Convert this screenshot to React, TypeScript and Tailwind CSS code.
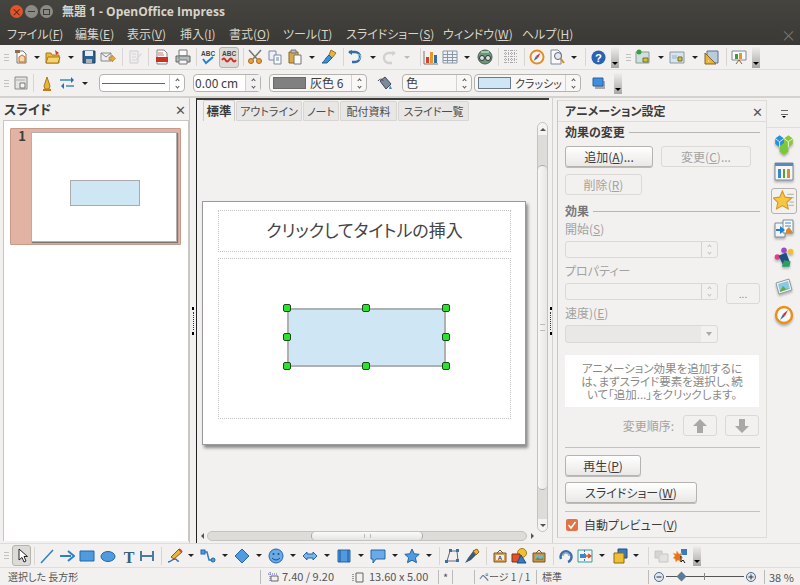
import type { ReactNode } from "react";

const S = ({ children, c = "" }: { children: ReactNode; c?: string }) => (
  <svg viewBox="0 0 16 16" className={`h-4 w-4 shrink-0 ${c}`}>{children}</svg>
);

function T({ w, children }: { w: string; children?: ReactNode }) {
  return <div className={`flex shrink-0 items-center justify-center ${w}`}>{children}</div>;
}
const Drop = ({ w }: { w: string }) => (
  <T w={w}>
    <div className="h-0 w-0 border-x-[3px] border-t-[3px] border-x-transparent border-t-[#222]" />
  </T>
);
const DropOff = ({ w }: { w: string }) => (
  <T w={w}>
    <div className="h-0 w-0 border-x-[3px] border-t-[3px] border-x-transparent border-t-[#bbb]" />
  </T>
);
const Sep = ({ w }: { w: string }) => (
  <T w={w}>
    <div className="h-[18px] w-px shrink-0 bg-[#d8d6d3]" />
  </T>
);
const Grip = ({ w }: { w: string }) => (
  <T w={w}>
    <div className="flex flex-col gap-[2px]">
      <div className="h-px w-[5px] bg-[#c4c2be]" />
      <div className="h-px w-[5px] bg-[#c4c2be]" />
      <div className="h-px w-[5px] bg-[#c4c2be]" />
    </div>
  </T>
);
const Over = ({ w, h }: { w: string; h: string }) => (
  <T w={w}>
    <div className={`flex w-2 shrink-0 items-end justify-center bg-gradient-to-b from-[#efeeec] to-[#a9a7a3] pb-[3px] ${h}`}>
      <div className="h-0 w-0 border-x-[3px] border-t-[3px] border-x-transparent border-t-black" />
    </div>
  </T>
);

/* toolbar icons */
const INew = () => <S><path d="M4 2h6l3 3v9H4z" fill="#fdfdfb" stroke="#777" /><path d="M6 8l3-2 3 2v5H6z" fill="#f5d9a8" stroke="#d2651d" /><path d="M2 1h5v3H2z" fill="#8a6d4c" /></S>;
const IOpen = () => <S><path d="M1 4h5l1 2h7v8H1z" fill="#e8b93a" stroke="#a8791a" /><path d="M1 14l2-6h12l-2 6z" fill="#f6d469" stroke="#a8791a" /><path d="M10 1l4 3-3 2z" fill="#d9391e" /></S>;
const ISave = () => <S><path d="M2 2h12v12H2z" fill="#2f5f8c" stroke="#1f3f60" /><path d="M4 2h8v5H4z" fill="#e8edf2" /><path d="M5 10h6v4H5z" fill="#a9b6c2" /></S>;
const IMail = () => <S><path d="M1 4h10v8H1z" fill="#eee" stroke="#888" /><path d="M1 4l5 4 5-4" fill="none" stroke="#888" /><path d="M9 8h3V6l3.500 3.500L12 13v-2H9z" fill="#e8a93a" stroke="#b07a18" strokeWidth=".6" /></S>;
const IEdit = () => <S c="opacity-40"><path d="M3 2h8v12H3z" fill="#eee" stroke="#999" /><path d="M5 5h4M5 8h4M5 11h3" stroke="#aaa" /><path d="M8 11l6-7 1 1-6 7z" fill="#bbb" /></S>;
const IPdf = () => <S><path d="M3 1h7l3 3v11H3z" fill="#fafafa" stroke="#888" /><path d="M2 8h12v5H2z" fill="#cf2f22" /><path d="M4 4h5M4 6h6" stroke="#cf7a70" /></S>;
const IPrint = () => <S><path d="M4 1h8v6H4z" fill="#fafafa" stroke="#777" /><path d="M1 7h14v6H1z" fill="#b8bcbf" stroke="#666" /><path d="M4 11h8v4H4z" fill="#f5f5f5" stroke="#777" /><path d="M3 9h2" stroke="#3a9a3a" /></S>;
const ISpell = () => <S><text x="1" y="7" fontSize="6.500" fontWeight="700" fill="#444" fontFamily="Liberation Sans">ABC</text><path d="M3 10l3 4 7-6" fill="none" stroke="#2b7fd0" strokeWidth="2" /></S>;
const IAuto = () => <S><text x="1" y="7" fontSize="6.500" fontWeight="700" fill="#444" fontFamily="Liberation Sans">ABC</text><path d="M1 11q2-3 3.500 0t3.500 0 3.500 0 3.500 0" fill="none" stroke="#d12a1e" strokeWidth="1.800" /></S>;
const ICut = () => <S><path d="M2 1l8 9M14 1l-8 9" stroke="#777" strokeWidth="1.600" /><circle cx="4" cy="12" r="2.500" fill="#e8a03a" stroke="#b3661a" /><circle cx="12" cy="12" r="2.500" fill="#e8a03a" stroke="#b3661a" /></S>;
const ICopy = () => <S><path d="M2 2h7v9H2z" fill="#eef" stroke="#7a8a9a" /><path d="M7 6h7v9H7z" fill="#fafafa" stroke="#7a8a9a" /><path d="M9 9h3M9 11h3" stroke="#5a8ac0" /></S>;
const IPaste = () => <S><path d="M2 3h9v11H2z" fill="#d8a84a" stroke="#8a6420" /><path d="M4 1h5v3H4z" fill="#bbb" stroke="#777" /><path d="M7 6h7v9H7z" fill="#fafafa" stroke="#777" /></S>;
const IBrush = () => <S><path d="M10 1l5 3-4 5-3-3z" fill="#e8b43a" stroke="#9a7320" /><path d="M8 6l3 3-5 5H1c3-2 3-5 7-8z" fill="#3d8fd8" stroke="#1f5f9c" /></S>;
const IUndo = () => <S><path d="M2 3h6a5 5 0 010 10H5" fill="none" stroke="#2f6ea8" strokeWidth="2.400" /><path d="M1 3l4-2v5z" fill="#2f6ea8" /><path d="M11 5l3 2-2 4" fill="none" stroke="#9cc" /></S>;
const IRedo = () => <S c="opacity-30"><path d="M14 4H8a5 5 0 000 10h3" fill="none" stroke="#888" strokeWidth="2.400" /><path d="M15 4l-4-2v5z" fill="#888" /></S>;
const IChart = () => <S><path d="M1 2v13h14" fill="none" stroke="#777" /><path d="M3 8h3v6H3z" fill="#d8402c" /><path d="M7 3h3v11H7z" fill="#e8962a" /><path d="M11 6h3v8h-3z" fill="#2f6ea8" /></S>;
const ITable = () => <S><path d="M1 2h14v12H1z" fill="#eef2f6" stroke="#8a97a5" /><path d="M1 5.500h14M1 8.500h14M1 11.500h14M5.500 2v12M10.500 2v12" stroke="#8a97a5" /></S>;
const INav = () => <S><circle cx="8" cy="8" r="7" fill="#6a9a72" stroke="#4a5a58" /><circle cx="5" cy="9" r="2.500" fill="#d8e4e8" stroke="#333" /><circle cx="11" cy="9" r="2.500" fill="#d8e4e8" stroke="#333" /><path d="M4 3h8" stroke="#cfe" /></S>;
const IGrid = () => <S><path d="M1 1.500h14M1 4.500h14M1 7.500h14M1 10.500h14M1 13.500h14M2.500 1v14M5.500 1v14M8.500 1v14M11.500 1v14" stroke="#aaa" strokeDasharray="1 1" /></S>;
const ICompass = () => <S><circle cx="8" cy="8" r="6.500" fill="#f4f4f4" stroke="#e88c1e" strokeWidth="2" /><path d="M11.500 4L7 7l2 2z" fill="#d8302a" /><path d="M4.500 12L7 7l2 2z" fill="#2f6ea8" /></S>;
const IZoom = () => <S><path d="M2 1h7l3 3v11H2z" fill="#fafafa" stroke="#7a8a9a" /><circle cx="9" cy="7" r="3.500" fill="#dfeaf4" stroke="#666" /><path d="M11.500 9.500L15 14" stroke="#c89030" strokeWidth="2" /></S>;
const IHelp = () => <svg viewBox="0 0 16 16" className="h-[15px] w-[15px] shrink-0"><circle cx="8" cy="8" r="7.500" fill="#2a63b4" /><text x="8" y="12.500" textAnchor="middle" fontSize="12" fontWeight="700" fill="#fff" fontFamily="Liberation Sans">?</text></svg>;
const ISlideNew = () => <S><path d="M1 3h13v11H1z" fill="#cfe0dc" stroke="#8a9a98" /><path d="M8 9h5v4H8z" fill="#c9c34a" stroke="#77701a" /><circle cx="4" cy="3" r="2.500" fill="#3aa03a" /></S>;
const ILayout = () => <S><path d="M1 3h14v11H1z" fill="#d8e4ee" stroke="#8a9aa8" /><path d="M3 6h5v4H3z" fill="#b8cbd8" /><path d="M9 8h4v4H9z" fill="#c9c34a" stroke="#77701a" /></S>;
const IDesign = () => <S><path d="M3 2h11v12H3z" fill="#b8cce0" stroke="#5a7090" /><path d="M1 15V4l11 11z" fill="#e8b43a" stroke="#8a6420" /><path d="M4 11v1.500h1.500z" fill="#fff" /></S>;
const IShow = () => <S><path d="M1 2h14v9H1z" fill="#fafafa" stroke="#7a8a98" /><path d="M4 5h3v5H4z" fill="#3a9a4a" /><path d="M8 4h3v6H8z" fill="#e8962a" /><path d="M8 11l-3 4M8 11l3 4" stroke="#a05a2a" /></S>;
const ISlideMini = () => <S><path d="M2 2h12v12H2z" fill="#e4e4e2" stroke="#8a8a88" /><path d="M3 5h9" stroke="#aaa" /><path d="M7 8h5v5H7z" fill="#f4f4f4" stroke="#777" /></S>;
const ILineStyle = () => <S><path d="M6 14h4l1-3-3-9-3 9z" fill="#e8b43a" stroke="#a87a1a" /><path d="M4 15h8" stroke="#c87a1a" strokeWidth="2" /></S>;
const IArrowsLine = () => <S><path d="M1 5h11M7 11h8" stroke="#3a8ac8" strokeWidth="1.600" /><path d="M12 2l3 3-3 3zM5 8l-3 3 3 3z" fill="#2f6ea8" /></S>;
const IBucket = () => <S><path d="M3 6l5-4 6 7-5 5z" fill="#7a8a98" stroke="#445" /><path d="M1 6c2-3 5-2 5 0" fill="none" stroke="#445" /><path d="M13 10l2 4h-3z" fill="#3a8ac8" /></S>;
const IShadow = () => <S><path d="M4 6h10v8H4z" fill="#aaa" /><path d="M2 3h10v8H2z" fill="#3f8fe0" stroke="#2a62a0" /></S>;

const IPointer = () => <S><path d="M5 1v11l3-2.500 2 4.500 2-1-2-4.500h3.500z" fill="#fff" stroke="#222" /></S>;
const ILine = () => <S><path d="M2 15L14 2" stroke="#2f7fc8" strokeWidth="1.500" /></S>;
const IArrowR = () => <S><path d="M1 8h11" stroke="#2f7fc8" strokeWidth="2" /><path d="M9 3l6 5-6 5" fill="none" stroke="#2f7fc8" strokeWidth="2" /></S>;
const IRect = () => <S><path d="M1 3h14v10H1z" fill="#4f9be0" stroke="#2565a8" /></S>;
const IEllipse = () => <S><ellipse cx="8" cy="8.500" rx="7" ry="5" fill="#4f9be0" stroke="#2565a8" /></S>;
const ITextTool = () => <S><text x="8" y="14.500" textAnchor="middle" fontSize="16" fontWeight="700" fill="#3a5f80" fontFamily="Liberation Serif">T</text></S>;
const IDim = () => <S><path d="M2 3v10M14 3v10M2 8h12" stroke="#4a7aa0" strokeWidth="2" /></S>;
const IPen = () => <S><path d="M1 14c3 0 4-3 7-3s1 3 4 2" fill="none" stroke="#2f6ea8" strokeWidth="1.400" /><path d="M4 9l8-8 3 3-8 7z" fill="#e8b43a" stroke="#8a5a1a" /><path d="M12 1l3 3" stroke="#d8402c" strokeWidth="2" /></S>;
const IConn = () => <S><path d="M3 4h4l2 8h4" fill="none" stroke="#2f7fc8" strokeWidth="1.500" /><rect x="1" y="2" width="4" height="4" fill="#4f9be0" stroke="#2565a8" /><circle cx="13" cy="12" r="2" fill="#4f9be0" stroke="#2565a8" /></S>;
const IDiamond = () => <S><path d="M8 1l7 7-7 7-7-7z" fill="#4f9be0" stroke="#2565a8" /></S>;
const ISmile = () => <S><circle cx="8" cy="8" r="7" fill="#6aaae8" stroke="#2565a8" /><circle cx="5.500" cy="6" r="1" fill="#1f4f80" /><circle cx="10.500" cy="6" r="1" fill="#1f4f80" /><path d="M4 10q4 4 8 0" fill="none" stroke="#1f4f80" /></S>;
const IBlock = () => <S><path d="M1 8l4-4v2h6V4l4 4-4 4v-2H5v2z" fill="#7ab5ec" stroke="#2565a8" /></S>;
const IFlow = () => <S><path d="M2 2h12v12H2z" fill="#4f9be0" stroke="#2565a8" /><path d="M4 2v12M12 2v12" stroke="#1f5590" /></S>;
const ICallout = () => <S><path d="M1 2h14v9H6l-3 4v-4H1z" fill="#6aaae8" stroke="#2565a8" /></S>;
const IStar = () => <S><path d="M8 1l2.200 4.800 5 .500-3.800 3.400 1.100 5L8 12.200 3.500 14.700l1.100-5L.8 6.300l5-.500z" fill="#4f9be0" stroke="#2565a8" /></S>;
const IPoints = () => <S><path d="M3 13L6 3h7l1 10z" fill="none" stroke="#667" /><path d="M5 1h3v3H5zM12 1h3v3h-3zM1 12h3v3H1zM12 11h3v3h-3z" fill="#3a6ea8" /></S>;
const IGlue = () => <S><path d="M1 15l3-5 6-8 4 3-7 7z" fill="#3a5a7a" /><path d="M9 3l4-2 2 3-3 3z" fill="#e8b43a" stroke="#8a6420" /></S>;
const IFontwork = () => <S><path d="M2 5h12v9H2z" fill="#d8a050" stroke="#7a5a2a" /><path d="M5 5l3-3 3 3" fill="none" stroke="#7a5a2a" /><path d="M4 7h8v5H4z" fill="#eee" /><text x="8" y="11.500" textAnchor="middle" fontSize="6" fontWeight="700" fill="#246" fontFamily="Liberation Sans">A</text></S>;
const IShapes = () => <S><circle cx="11" cy="5" r="4.500" fill="#f0c030" stroke="#a88018" /><path d="M1 6h8v8H1z" fill="#e0522a" stroke="#8a3018" /><path d="M10 7l5 8H6z" fill="#3a7ac0" stroke="#1f4f80" /></S>;
const IPicture = () => <S><path d="M2 5h12v9H2z" fill="#c89040" stroke="#7a5a2a" /><path d="M5 5l3-3 3 3" fill="none" stroke="#7a5a2a" /><path d="M4 7h8v5H4z" fill="#7ab0d8" /><path d="M4 12l3-3 2 2 3-1v2z" fill="#5a9a3a" /></S>;
const IRotate = () => <S><path d="M3 11a5.500 5.500 0 117 3" fill="none" stroke="#3a6ea8" strokeWidth="2.500" /><path d="M5 8a3 3 0 116 0" fill="none" stroke="#9ab" strokeWidth="1.500" /></S>;
const IAlign = () => <S><path d="M1 2h14v12H1z" fill="#f4f4f4" stroke="#3a9a9a" /><path d="M7.500 2v12" stroke="#3a7ac0" strokeDasharray="2 1" /><path d="M3 6h6v4H3z" fill="#3a8ac8" /><path d="M9 8h5M11 6l3 2-3 2" fill="none" stroke="#d8502a" strokeWidth="1.400" /></S>;
const IArrange = () => <S><path d="M6 1h9v9H6z" fill="#3a7ac0" stroke="#1f4f80" /><path d="M2 5h10v10H2z" fill="#f0c030" stroke="#8a6a18" /></S>;
const IExtrude = () => <S c="opacity-40"><path d="M2 3h7v7H2z" fill="#aaa" stroke="#888" /><path d="M9 6h6v8H6v-4" fill="#ccc" stroke="#888" /></S>;
const IInteract = () => <S><path d="M9 1h6v6H9z" fill="#3a7ac0" /><path d="M1 5l3 1 1-3 2 3 3-1-1 3 2 2-3 1 1 3-3-2-2 2-1-3-2-1 2-2z" fill="#e8702a" stroke="#f4c030" strokeWidth=".6" /><path d="M9 8v6l2-2 2 3" fill="#fff" stroke="#111" /></S>;

/* sidebar deck icons */
const DeckCube = () => <svg viewBox="0 0 20 20" className="h-[22px] w-[22px]"><path d="M2 5l4-3 4 3v5l-4 3-4-3z" fill="#2f8fd8" /><path d="M10 5l4-3 4 3v5l-4 3-4-3z" fill="#8ac83a" /><path d="M6 12l4-3 4 3v5l-4 3-4-3z" fill="#7ac83a" /><path d="M2 5l4 3 4-3M10 5l4 3 4-3M6 8v5M14 8v5" fill="none" stroke="#fff" strokeWidth=".7" /></svg>;
const DeckBoard = () => <svg viewBox="0 0 20 20" className="h-5 w-5"><path d="M1 1h18v17H1z" fill="#f4f6f8" stroke="#7a8a98" /><path d="M1 1h18v3H1z" fill="#5a88b8" /><path d="M4 7h3v9H4z" fill="#3a8ac8" /><path d="M9 7h2v9H9z" fill="#5aa03a" /><path d="M13 7h3v9h-3z" fill="#d8902a" /></svg>;
const DeckStar = () => <svg viewBox="0 0 20 20" className="h-[22px] w-[22px]"><path d="M13 4h6M14 7h5M15 11h4M14 14h5" stroke="#bbb" /><path d="M8.500 1l2.500 5.500 6 .700-4.400 4 1.200 6-5.300-3-5.300 3 1.200-6L.1 7.200l6-.700z" fill="#f6c840" stroke="#d8942a" /></svg>;
const DeckTrans = () => <svg viewBox="0 0 20 20" className="h-5 w-5"><path d="M1 4h10v14H1z" fill="#f4f4f4" stroke="#7a8a98" /><path d="M9 1h10v13H9z" fill="#fafafa" stroke="#7a8a98" /><path d="M11 4h6M11 7h6" stroke="#3a8ac8" /><path d="M2 10h4V7l5 4-5 4v-3H2z" fill="#1f7fd0" /><path d="M12 11l3-3 3 4v2h-6z" fill="#d88a2a" /></svg>;
const DeckGallery = () => <svg viewBox="0 0 20 20" className="h-[22px] w-[22px]"><circle cx="4" cy="9" r="2.500" fill="#e83a8a" /><circle cx="10" cy="3" r="2.500" fill="#9a4ac8" /><circle cx="16" cy="4" r="2.500" fill="#f0c030" /><path d="M5 8l7-3 3 8-5 5z" fill="#1f4f80" /><path d="M10 12l6 1-1 5H8z" fill="#2aa060" /></svg>;
const DeckPhoto = () => <svg viewBox="0 0 20 20" className="h-5 w-5"><path d="M2 6l13-4 3 11-13 4z" fill="#f4f4f4" stroke="#8a9a98" /><path d="M4 7l10-3 2 8-10 3z" fill="#8ac8e8" /><path d="M6 14l3-5 3 3 4-1-10 4z" fill="#6aa83a" /></svg>;
const DeckCompass = () => <svg viewBox="0 0 20 20" className="h-5 w-5"><circle cx="10" cy="10" r="8" fill="#f8f8f8" stroke="#e8901e" strokeWidth="2.400" /><path d="M14 5l-5 4 2 2z" fill="#d8302a" /><path d="M6 15l3-6 2 2z" fill="#2f6ea8" /></svg>;

function Spin({ off = false, c = "" }: { off?: boolean; c?: string }) {
  const col = off ? "border-[#c4c2be]" : "border-[#555]";
  return (
    <div className={`flex shrink-0 flex-col items-center justify-center gap-[3px] border-l border-[#d4d2ce] ${c}`}>
      <div className={`h-[3px] w-[3px] rotate-45 border-l border-t ${col}`} />
      <div className={`h-[3px] w-[3px] rotate-45 border-b border-r ${col}`} />
    </div>
  );
}

function Btn({ label, hot, tail = "", w, h, off = false }: { label: string; hot: string; tail?: string; w: string; h: string; off?: boolean }) {
  return (
    <div className={`flex items-center justify-center rounded-[3px] border text-[12px] ${w} ${h} ${off ? "border-[#dbd9d6] text-[#a3a29e]" : "border-[#b5b3ae] bg-gradient-to-b from-white to-[#e9e8e6] text-[#3c3c3c] shadow-[0_1px_0_#bbb]"}`}>
      {label}(<span className="underline">{hot}</span>){tail}
    </div>
  );
}

function SectionHead({ label, off = false }: { label: string; off?: boolean }) {
  return (
    <div className="flex h-5 items-center gap-1">
      <span className={`text-[12px] font-bold ${off ? "text-[#77767a]" : "text-[#3c3c3c]"}`}>{label}</span>
      <div className="h-px flex-1 bg-[#b8b6b2]" />
    </div>
  );
}

function Handle({ pos }: { pos: string }) {
  return <div className={`absolute h-2 w-2 rounded-[2px] border border-[#1a4a1a] bg-[#2fe02f] ${pos}`} />;
}

function SplitDots() {
  return (
    <div className="flex h-[28px] w-[3px] flex-col items-center justify-between">
      <div className="h-[3px] w-[2px] bg-black" />
      <div className="h-[18px] w-px border-l border-dotted border-[#333]" />
      <div className="h-[3px] w-[2px] bg-black" />
    </div>
  );
}

const tabOff = "flex h-[20px] items-center justify-center rounded-t-[2px] border border-[#d8d6d2] bg-[#e8e7e5] text-[11px] text-[#4c4c4c]";
const deckItem = "flex h-[26px] w-[26px] items-center justify-center drop-shadow-[0_2px_1px_rgba(0,0,0,0.25)]";

export default function App() {
  return (
    <div className="flex h-[585px] w-[800px] flex-col overflow-hidden bg-[#f2f1f0] font-['Noto_Sans_CJK_JP',sans-serif] text-[#3c3c3c] [font-feature-settings:'palt']">
      {/* title + menu */}
      <div className="h-[45px] shrink-0 bg-gradient-to-b from-[#45443f] to-[#3a3935]">
        <div className="flex h-[23px] items-center pl-[10px]">
          <div className="flex h-[13px] w-[13px] items-center justify-center rounded-full bg-[#e2542a] text-[10px] leading-none text-[#4a1a0a]">×</div>
          <div className="ml-[2px] flex h-[13px] w-[13px] items-center justify-center rounded-full bg-[#8c8a84]"><div className="h-px w-[7px] bg-[#3c3b37]" /></div>
          <div className="ml-[2px] flex h-[13px] w-[13px] items-center justify-center rounded-full bg-[#8c8a84]"><div className="h-[6px] w-[7px] border border-[#3c3b37]" /></div>
          <span className="ml-[9px] font-['Open_Sans','Noto_Sans_CJK_JP',sans-serif] text-[12px] font-bold text-[#d8d4ca]">無題 1 - OpenOffice Impress</span>
        </div>
        <div className="flex h-[22px] items-center justify-between text-[12px] text-[#d8d4ca]">
          <div className="flex items-center pl-[7px]">
            <span className="w-[68px]">ファイル(<span className="underline">F</span>)</span>
            <span className="w-[52px]">編集(<span className="underline">E</span>)</span>
            <span className="w-[53px]">表示(<span className="underline">V</span>)</span>
            <span className="w-[49px]">挿入(<span className="underline">I</span>)</span>
            <span className="w-[54px]">書式(<span className="underline">O</span>)</span>
            <span className="w-[63px]">ツール(<span className="underline">T</span>)</span>
            <span className="w-[97px]">スライドショー(<span className="underline">S</span>)</span>
            <span className="w-[79px]">ウィンドウ(<span className="underline">W</span>)</span>
            <span>ヘルプ(<span className="underline">H</span>)</span>
          </div>
          <span className="pr-[4px] text-[15px] leading-none text-[#77756f]">×</span>
        </div>
      </div>

      {/* standard toolbar */}
      <div className="flex h-[25px] shrink-0 items-center border-b border-[#e0dedb]">
        <Grip w="w-[12px]" />
        <T w="w-[17px]"><INew /></T>
        <Drop w="w-[16px]" />
        <T w="w-[16px]"><IOpen /></T>
        <Drop w="w-[20px]" />
        <T w="w-[16px]"><ISave /></T>
        <T w="w-[22px]"><IMail /></T>
        <Sep w="w-[6px]" />
        <T w="w-[20px]"><IEdit /></T>
        <Sep w="w-[6px]" />
        <T w="w-[22px]"><IPdf /></T>
        <T w="w-[20px]"><IPrint /></T>
        <Sep w="w-[6px]" />
        <T w="w-[18px]"><ISpell /></T>
        <T w="w-[24px]">
          <div className="flex h-[21px] w-[20px] items-center justify-center rounded-[3px] border border-[#b5b3ae] bg-[#dddbd8]"><IAuto /></div>
        </T>
        <Sep w="w-[4px]" />
        <T w="w-[20px]"><ICut /></T>
        <T w="w-[20px]"><ICopy /></T>
        <T w="w-[20px]"><IPaste /></T>
        <Drop w="w-[14px]" />
        <T w="w-[20px]"><IBrush /></T>
        <Sep w="w-[8px]" />
        <T w="w-[16px]"><IUndo /></T>
        <Drop w="w-[20px]" />
        <T w="w-[12px]"><IRedo /></T>
        <DropOff w="w-[24px]" />
        <Sep w="w-[2px]" />
        <T w="w-[20px]"><IChart /></T>
        <T w="w-[18px]"><ITable /></T>
        <Drop w="w-[16px]" />
        <T w="w-[20px]"><INav /></T>
        <Sep w="w-[6px]" />
        <T w="w-[20px]"><IGrid /></T>
        <Sep w="w-[6px]" />
        <T w="w-[20px]"><ICompass /></T>
        <T w="w-[20px]"><IZoom /></T>
        <Drop w="w-[14px]" />
        <Sep w="w-[8px]" />
        <T w="w-[18px]"><IHelp /></T>
        <Over w="w-[16px]" h="h-[21px]" />
        <Grip w="w-[10px]" />
        <T w="w-[20px]"><ISlideNew /></T>
        <Drop w="w-[16px]" />
        <T w="w-[16px]"><ILayout /></T>
        <Drop w="w-[20px]" />
        <T w="w-[14px]"><IDesign /></T>
        <Sep w="w-[14px]" />
        <T w="w-[12px]"><IShow /></T>
        <Over w="w-[22px]" h="h-[21px]" />
      </div>

      {/* line and filling toolbar */}
      <div className="flex h-[26px] shrink-0 items-center text-[12px]">
        <Grip w="w-[12px]" />
        <T w="w-[17px]"><ISlideMini /></T>
        <Sep w="w-[9px]" />
        <T w="w-[18px]"><ILineStyle /></T>
        <T w="w-[22px]"><IArrowsLine /></T>
        <Drop w="w-[14px]" />
        <div className="ml-[7px] flex h-[18px] w-[86px] items-center rounded-[4px] border border-[#b5b3ae] bg-white pl-[2px]">
          <div className="h-px flex-1 bg-[#666]" />
          <Spin c="ml-1 h-full w-[15px]" />
        </div>
        <div className="ml-2 flex h-[18px] w-[68px] items-center rounded-[4px] border border-[#b5b3ae] bg-white pl-[1px]">
          <span className="flex-1 text-[12px]">0.00 cm</span>
          <Spin c="h-full w-[15px] bg-[#f2f1f0]" />
        </div>
        <div className="ml-2 flex h-[18px] w-[98px] items-center rounded-[4px] border border-[#b5b3ae] bg-[#f8f7f6] pl-[3px]">
          <div className="h-[12px] w-[33px] border border-[#6a6a6a] bg-[#808080]" />
          <span className="ml-1 flex-1">灰色 6</span>
          <Spin c="h-full w-[15px]" />
        </div>
        <T w="w-[35px]"><IBucket /></T>
        <div className="flex h-[18px] w-[70px] items-center rounded-[4px] border border-[#b5b3ae] bg-[#f8f7f6] pl-[3px]">
          <span className="flex-1">色</span>
          <Spin c="h-full w-[15px]" />
        </div>
        <div className="ml-[2px] flex h-[18px] w-[107px] items-center rounded-[4px] border border-[#b5b3ae] bg-[#f8f7f6] pl-[3px]">
          <div className="h-[12px] w-[33px] border border-[#6a7a88] bg-[#cfe6f4]" />
          <span className="ml-1 flex-1 overflow-hidden whitespace-nowrap text-[11px]">クラッシッ</span>
          <Spin c="h-full w-[15px]" />
        </div>
        <T w="w-[36px]"><IShadow /></T>
        <Over w="w-[1px]" h="h-[21px]" />
      </div>

      {/* main area */}
      <div className="flex min-h-0 flex-1 border-t-2 border-[#d4d2ce]">
        {/* slides pane */}
        <div className="flex w-[189px] shrink-0 flex-col pb-[2px] pl-[3px]">
          <div className="flex h-[23px] shrink-0 items-center justify-between border-b border-[#c8c6c2] pl-[1px] pr-[3px]">
            <span className="text-[13px] font-bold">スライド</span>
            <span className="text-[13px] leading-none text-[#555]">✕</span>
          </div>
          <div className="flex-1 border-x border-[#c8c6c2] bg-white pl-[6px] pt-[7px]">
            <div className="flex h-[117px] w-[171px] items-start rounded-[1px] border border-[#c89a88] bg-[#e2b3a2] pt-[3px]">
              <span className="-mt-[3px] w-[20px] pr-[5px] text-right text-[13px] font-bold leading-[14px]">1</span>
              <div className="h-[110px] w-[146px] border border-[#b0b0b0] bg-white pl-[38px] pt-[47px] shadow-[1px_1px_1px_#777]">
                <div className="h-[26px] w-[70px] border border-[#aaa] bg-[#cfe6f4]" />
              </div>
            </div>
          </div>
        </div>

        {/* splitter */}
        <div className="flex w-[7px] shrink-0 items-center justify-center border-l border-[#c8c6c2]"><SplitDots /></div>

        {/* document view */}
        <div className="flex w-[353px] shrink-0 flex-col border-l border-t-2 border-l-[#222] border-t-[#3c3b37]">
          <div className="flex min-h-0 flex-1">
            <div className="flex w-[340px] shrink-0 flex-col">
              <div className="flex h-[21px] items-end gap-[1px] pl-[6px]">
                <div className="flex h-[21px] w-[32px] items-center justify-center rounded-t-[2px] border border-b-0 border-[#d0cecb] text-[12.500px] font-bold">標準</div>
                <div className={`${tabOff} w-[66px]`}>アウトライン</div>
                <div className={`${tabOff} w-[36px]`}>ノート</div>
                <div className={`${tabOff} w-[57px]`}>配付資料</div>
                <div className={`${tabOff} w-[71px]`}>スライド一覧</div>
              </div>
              <div className="ml-[5px] mt-[80px] h-[244px] w-[324px] border border-[#9a9a9a] bg-white pl-[15px] pt-[8px] shadow-[2px_3px_3px_#8a8a8a]">
                <div className="flex h-[42px] w-[293px] items-center justify-center border border-dotted border-[#c4c4c4] pb-[2px] text-[17px] text-[#444]">クリックしてタイトルの挿入</div>
                <div className="relative mt-[6px] h-[161px] w-[293px] border border-dotted border-[#c4c4c4]">
                  <div className="absolute left-[68px] top-[49px] h-[59px] w-[159px] border-2 border-[#aeb0b2] bg-[#cfe6f4]" />
                  <Handle pos="left-[64px] top-[45px]" />
                  <Handle pos="left-[143px] top-[45px]" />
                  <Handle pos="left-[223px] top-[45px]" />
                  <Handle pos="left-[64px] top-[74px]" />
                  <Handle pos="left-[223px] top-[74px]" />
                  <Handle pos="left-[64px] top-[103px]" />
                  <Handle pos="left-[143px] top-[103px]" />
                  <Handle pos="left-[223px] top-[103px]" />
                </div>
              </div>
            </div>
            {/* vertical scrollbar */}
            <div className="mt-[22px] flex h-[410px] w-[11px] shrink-0 flex-col items-center rounded-full border border-[#c4c2be] bg-[#dedcd9]">
              <div className="flex h-[12px] w-full items-center justify-center rounded-t-full bg-[#f4f3f2]"><div className="h-0 w-0 border-x-[3px] border-b-[3px] border-x-transparent border-b-[#555]" /></div>
              <div className="mt-[30px] flex h-[325px] w-full items-center justify-center rounded-full border-y border-[#aaa] bg-gradient-to-r from-[#f8f7f6] to-[#e8e7e5]"><div className="h-[7px] w-[5px] border-y border-[#bbb]" /></div>
              <div className="mt-auto flex h-[12px] w-full items-center justify-center rounded-b-full bg-[#f4f3f2]"><div className="h-0 w-0 border-x-[3px] border-t-[3px] border-x-transparent border-t-[#555]" /></div>
            </div>
          </div>
          {/* horizontal scrollbar */}
          <div className="mb-[2px] flex h-[10px] w-[340px] shrink-0 items-center">
            <div className="flex h-full w-[10px] shrink-0 items-center justify-center"><div className="h-0 w-0 border-y-[3px] border-r-[3px] border-y-transparent border-r-[#555]" /></div>
            <div className="h-full w-[320px] rounded-full border border-[#c4c2be] bg-[#dedcd9] pl-[103px]">
              <div className="flex h-full w-[112px] items-center justify-center rounded-full border-x border-[#aaa] bg-gradient-to-b from-[#fafaf9] to-[#e6e5e3]"><div className="h-[4px] w-[7px] border-x border-[#bbb]" /></div>
            </div>
            <div className="flex h-full w-[10px] shrink-0 items-center justify-center"><div className="h-0 w-0 border-y-[3px] border-l-[3px] border-y-transparent border-l-[#555]" /></div>
          </div>
        </div>

        {/* splitter */}
        <div className="flex w-[4px] shrink-0 items-center justify-start border-r border-[#d4d2ce]"><SplitDots /></div>

        {/* animation pane */}
        <div className="ml-[4px] mt-[2px] flex h-[438px] w-[210px] shrink-0 flex-col border border-[#dedcd9] border-l-[#c8c6c2] pl-[7px] pr-[6px]">
          <div className="-ml-[7px] -mr-[6px] flex h-[21px] shrink-0 items-center justify-between border-b border-[#dedcd9] pl-[7px] pr-[3px]">
            <span className="text-[12px] font-bold">アニメーション設定</span>
            <span className="text-[13px] leading-none text-[#555]">✕</span>
          </div>
          <SectionHead label="効果の変更" />
          <div className="mt-[4px] flex gap-2">
            <Btn label="追加" hot="A" tail="..." w="w-[88px]" h="h-[21px]" />
            <Btn label="変更" hot="C" tail="..." w="w-[90px]" h="h-[21px]" off />
          </div>
          <div className="mt-[7px]"><Btn label="削除" hot="R" w="w-[77px]" h="h-[21px]" off /></div>
          <div className="mt-[6px]"><SectionHead label="効果" off /></div>
          <div className="h-4 text-[12px] leading-4 text-[#a3a29e]">開始(<span className="underline">S</span>)</div>
          <div className="mt-[4px] flex h-[17px] w-[153px] justify-end rounded-[3px] border border-[#dbd9d6]"><Spin off c="w-[16px]" /></div>
          <div className="mt-[5px] h-4 text-[12px] leading-4 text-[#a3a29e]">プロパティー</div>
          <div className="mt-[4px] flex h-[21px] items-start gap-2">
            <div className="flex h-[17px] w-[153px] justify-end rounded-[3px] border border-[#dbd9d6]"><Spin off c="w-[16px]" /></div>
            <div className="flex h-[21px] w-[34px] items-center justify-center rounded-[3px] border border-[#dbd9d6] text-[10px] text-[#888]">...</div>
          </div>
          <div className="mt-[1px] h-4 text-[12px] leading-4 text-[#a3a29e]">速度)(<span className="underline">E</span>)</div>
          <div className="mt-[4px] flex h-[18px] w-[153px] justify-end rounded-[3px] border border-[#dbd9d6] bg-[#e9e8e6]">
            <div className="flex w-[16px] items-center justify-center rounded-r-[3px] bg-[#f2f1f0]"><div className="h-0 w-0 border-x-[3px] border-t-[4px] border-x-transparent border-t-[#aaa]" /></div>
          </div>
          <div className="mt-[12px] flex h-[52px] w-[194px] items-center justify-center bg-white text-center text-[11.500px] leading-[13px] text-[#8a8986]">
            <p>アニメーション効果を追加するに<br />は、まずスライド要素を選択し、続<br />いて「追加...」をクリックします。</p>
          </div>
          <div className="mt-[8px] flex h-[21px] items-center justify-end gap-2 pr-[1px]">
            <span className="mr-[1px] text-[12px] text-[#a3a29e]">変更順序:</span>
            <div className="flex h-[21px] w-[34px] items-center justify-center rounded-[3px] border border-[#dbd9d6]">
              <svg viewBox="0 0 16 16" className="h-4 w-4"><path d="M8 1l7 7h-4v7H5V8H1z" fill="#a9a8a5" /></svg>
            </div>
            <div className="flex h-[21px] w-[34px] items-center justify-center rounded-[3px] border border-[#dbd9d6]">
              <svg viewBox="0 0 16 16" className="h-4 w-4"><path d="M8 15l7-7h-4V1H5v7H1z" fill="#a9a8a5" /></svg>
            </div>
          </div>
          <div className="mt-[11px] h-px w-[195px] bg-[#c4c2be]" />
          <div className="mt-[7px]"><Btn label="再生" hot="P" w="w-[76px]" h="h-[21px]" /></div>
          <div className="mt-[6px]"><Btn label="スライドショー" hot="W" w="w-[132px]" h="h-[21px]" /></div>
          <div className="mt-[8px] h-px w-[195px] bg-[#c4c2be]" />
          <div className="mt-[5px] flex h-4 items-center gap-[6px] pl-[1px] text-[12px]">
            <div className="flex h-3 w-3 items-center justify-center rounded-[2px] bg-[#e0734a]">
              <svg viewBox="0 0 12 12" className="h-3 w-3"><path d="M2.500 6l2.500 3 4.500-6" fill="none" stroke="#fff" strokeWidth="1.500" /></svg>
            </div>
            <span>自動プレビュー(<span className="underline">V</span>)</span>
          </div>
        </div>

        {/* sidebar deck */}
        <div className="flex min-w-0 flex-1 flex-col items-center">
          <div className="flex h-[30px] w-full shrink-0 items-center justify-center border-b border-[#e0dedb] pl-[1px] pt-[2px]">
            <div className="flex flex-col items-center gap-[1px]">
              <div className="h-[5px] w-[7px] border-y border-[#666]" />
              <div className="h-0 w-0 border-x-[2px] border-t-[2px] border-x-transparent border-t-black" />
            </div>
          </div>
          <div className={`mt-[3px] ${deckItem}`}><DeckCube /></div>
          <div className={`mt-[2px] ${deckItem}`}><DeckBoard /></div>
          <div className="mt-[3px] flex h-[26px] w-[26px] items-center justify-center rounded-[3px] border border-[#b5b3ae]"><DeckStar /></div>
          <div className={`mt-[2px] ${deckItem}`}><DeckTrans /></div>
          <div className={`mt-[3px] ${deckItem}`}><DeckGallery /></div>
          <div className={`mt-[3px] ${deckItem}`}><DeckPhoto /></div>
          <div className={`mt-[2px] ${deckItem}`}><DeckCompass /></div>
        </div>
      </div>

      {/* drawing toolbar */}
      <div className="flex h-[24px] shrink-0 items-center border-t border-[#dedcd9]">
        <Grip w="w-[12px]" />
        <T w="w-[19px]">
          <div className="flex h-[21px] w-[19px] shrink-0 items-center justify-center rounded-[3px] border border-[#b5b3ae] bg-[#dddbd8]"><IPointer /></div>
        </T>
        <Sep w="w-[6px]" />
        <T w="w-[20px]"><ILine /></T>
        <T w="w-[20px]"><IArrowR /></T>
        <T w="w-[20px]"><IRect /></T>
        <T w="w-[22px]"><IEllipse /></T>
        <T w="w-[20px]"><ITextTool /></T>
        <T w="w-[16px]"><IDim /></T>
        <Sep w="w-[12px]" />
        <T w="w-[16px]"><IPen /></T>
        <Drop w="w-[16px]" />
        <T w="w-[18px]"><IConn /></T>
        <Drop w="w-[16px]" />
        <T w="w-[18px]"><IDiamond /></T>
        <Drop w="w-[16px]" />
        <T w="w-[17px]"><ISmile /></T>
        <Drop w="w-[17px]" />
        <T w="w-[17px]"><IBlock /></T>
        <Drop w="w-[17px]" />
        <T w="w-[17px]"><IFlow /></T>
        <Drop w="w-[17px]" />
        <T w="w-[17px]"><ICallout /></T>
        <Drop w="w-[17px]" />
        <T w="w-[17px]"><IStar /></T>
        <Drop w="w-[17px]" />
        <Sep w="w-[4px]" />
        <T w="w-[22px]"><IPoints /></T>
        <T w="w-[18px]"><IGlue /></T>
        <Sep w="w-[10px]" />
        <T w="w-[18px]"><IFontwork /></T>
        <T w="w-[20px]"><IShapes /></T>
        <T w="w-[20px]"><IPicture /></T>
        <Sep w="w-[8px]" />
        <T w="w-[18px]"><IRotate /></T>
        <T w="w-[20px]"><IAlign /></T>
        <Drop w="w-[14px]" />
        <T w="w-[22px]"><IArrange /></T>
        <Drop w="w-[10px]" />
        <Sep w="w-[14px]" />
        <T w="w-[12px]"><IExtrude /></T>
        <T w="w-[26px]"><IInteract /></T>
        <Over w="w-[8px]" h="h-[20px]" />
      </div>

      {/* status bar */}
      <div className="flex h-[18px] shrink-0 items-center border-t border-[#e0dedb] text-[11px] text-[#555]">
        <div className="w-[260px] shrink-0 pl-[8px] text-[10px]">選択した 長方形</div>
        <div className="flex h-[14px] w-[92px] shrink-0 items-center gap-[3px] border-l border-[#bbb] pl-[6px]">
          <svg viewBox="0 0 12 12" className="h-3 w-3 shrink-0"><path d="M1 3h10M3 1v10" stroke="#5a5ac8" strokeDasharray="1 1" /><path d="M4 5h7v5H4z" fill="none" stroke="#666" /></svg>
          <span>7.40 / 9.20</span>
        </div>
        <div className="flex w-[86px] shrink-0 items-center gap-[5px]">
          <svg viewBox="0 0 12 12" className="h-3 w-3 shrink-0"><path d="M4 2h7v9H4z" fill="none" stroke="#666" /><path d="M1 3v7" stroke="#444" strokeDasharray="1 1" /></svg>
          <span>13.60 x 5.00</span>
        </div>
        <div className="h-[14px] w-[15px] shrink-0 border-x border-[#bbb] pl-[4px] leading-[14px]">*</div>
        <div className="h-[14px] w-[22px] shrink-0 border-r border-[#bbb]" />
        <div className="h-[14px] w-[62px] shrink-0 border-r border-[#bbb] pl-[4px] text-[10px] leading-[14px]">ページ 1 / 1</div>
        <div className="h-[14px] w-[112px] shrink-0 border-r border-[#bbb] pl-[5px] text-[10px] leading-[14px]">標準</div>
        <div className="flex w-[115px] shrink-0 items-center pl-[4px]">
          <svg viewBox="0 0 12 12" className="h-3 w-3 shrink-0"><circle cx="6" cy="6" r="4.500" fill="#dfe8f0" stroke="#4a6a8a" /><path d="M3.500 6h5" stroke="#333" /></svg>
          <div className="relative mx-[1px] flex h-3 w-[78px] items-center">
            <div className="h-px w-full bg-[#555]" />
            <div className="absolute left-[12px] h-[7px] w-[7px] rotate-45 bg-[#5a7a96]" />
            <div className="absolute left-[38px] h-[7px] w-px bg-[#888]" />
          </div>
          <svg viewBox="0 0 12 12" className="h-3 w-3 shrink-0"><circle cx="6" cy="6" r="4.500" fill="#dfe8f0" stroke="#4a6a8a" /><path d="M3.500 6h5M6 3.500v5" stroke="#333" /></svg>
        </div>
        <div className="h-[14px] flex-1 border-l border-[#bbb] pl-[4px] leading-[14px]">38 %</div>
      </div>
    </div>
  );
}
